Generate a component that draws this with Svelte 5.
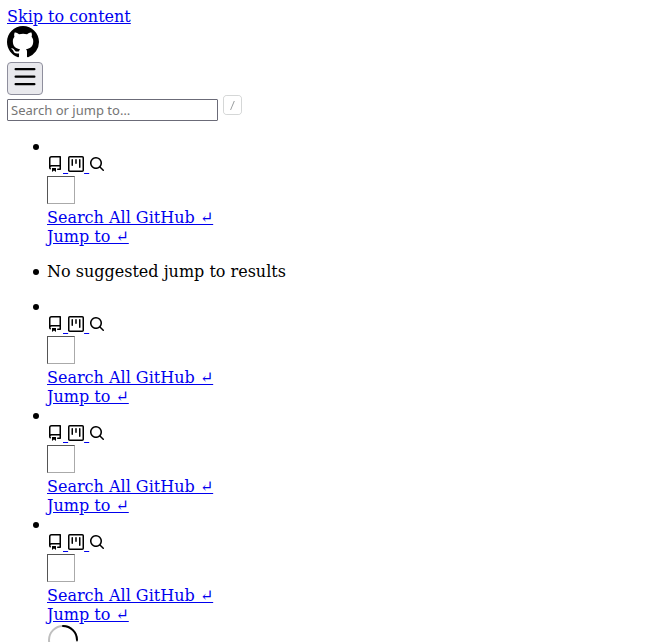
<script>
  const groups = [0, 1, 2];
</script>

{#snippet jump()}
  <div class="jump">
    <a href="#jump" class="icons"><svg width="16" height="16" viewBox="0 0 16 16"><path fill-rule="evenodd" d="M2 2.5A2.5 2.5 0 014.5 0h8.75a.75.75 0 01.75.75v12.5a.75.75 0 01-.75.75h-2.5a.75.75 0 110-1.5h1.75v-2h-8a1 1 0 00-.714 1.7.75.75 0 01-1.072 1.05A2.495 2.495 0 012 11.5v-9zm10.5-1V9h-8c-.356 0-.694.074-1 .208V2.5a1 1 0 011-1h8zM5 12.25v3.25a.25.25 0 00.4.2l1.45-1.087a.25.25 0 01.3 0L8.6 15.7a.25.25 0 00.4-.2v-3.25a.25.25 0 00-.25-.25h-3.5a.25.25 0 00-.25.25z"/></svg>{' '}<svg width="16" height="16" viewBox="0 0 16 16"><path fill-rule="evenodd" d="M1.75 0A1.75 1.75 0 000 1.75v12.5C0 15.216.784 16 1.75 16h12.5A1.75 1.75 0 0016 14.25V1.75A1.75 1.75 0 0014.25 0H1.75zM1.5 1.75a.25.25 0 01.25-.25h12.5a.25.25 0 01.25.25v12.5a.25.25 0 01-.25.25H1.75a.25.25 0 01-.25-.25V1.75zM11.75 3a.75.75 0 00-.75.75v7.5a.75.75 0 001.5 0v-7.5a.75.75 0 00-.75-.75zm-8.25.75a.75.75 0 011.5 0v5.5a.75.75 0 01-1.5 0v-5.5zM8 3a.75.75 0 00-.75.75v3.5a.75.75 0 001.5 0v-3.5A.75.75 0 008 3z"/></svg>{' '}<svg width="16" height="16" viewBox="0 0 16 16"><path fill-rule="evenodd" d="M11.5 7a4.499 4.499 0 11-8.998 0A4.499 4.499 0 0111.5 7zm-.82 4.74a6 6 0 111.06-1.06l3.04 3.04a.75.75 0 11-1.06 1.06l-3.04-3.04z"/></svg></a>
    <div class="avatar"></div>
    <div class="line"><a href="#all">Search All GitHub ↵</a></div>
    <div class="line"><a href="#to">Jump to ↵</a></div>
  </div>
{/snippet}

<main>
  <div class="line"><a href="#content">Skip to content</a></div>
  <svg class="logo" width="32" height="32" viewBox="0 0 16 16"><path fill-rule="evenodd" d="M8 0C3.58 0 0 3.58 0 8c0 3.54 2.29 6.53 5.47 7.59.4.07.55-.17.55-.38 0-.19-.01-.82-.01-1.49-2.01.37-2.53-.49-2.69-.94-.09-.23-.48-.94-.82-1.13-.28-.15-.68-.52-.01-.53.63-.01 1.08.58 1.23.82.72 1.21 1.87.87 2.33.66.07-.52.28-.87.51-1.07-1.78-.2-3.64-.89-3.64-3.95 0-.87.31-1.59.82-2.15-.08-.2-.36-1.02.08-2.12 0 0 .67-.21 2.2.82.64-.18 1.32-.27 2-.27.68 0 1.36.09 2 .27 1.53-1.04 2.2-.82 2.2-.82.44 1.1.16 1.92.08 2.12.51.56.82 1.27.82 2.15 0 3.07-1.87 3.75-3.65 3.95.29.25.54.73.54 1.48 0 1.07-.01 1.93-.01 2.2 0 .21.15.46.55.38A8.013 8.013 0 0016 8c0-4.42-3.58-8-8-8z"/></svg>
  <button aria-label="Menu"><svg width="24" height="24" viewBox="0 0 16 16"><path fill-rule="evenodd" d="M1 2.75A.75.75 0 011.75 2h12.5a.75.75 0 110 1.5H1.75A.75.75 0 011 2.75zm0 5A.75.75 0 011.75 7h12.5a.75.75 0 110 1.5H1.75A.75.75 0 011 7.75zM1.75 12a.75.75 0 100 1.5h12.5a.75.75 0 100-1.5H1.75z"/></svg></button>
  <div class="search">
    <input type="text" placeholder="Search or jump to…" />
    <svg width="22" height="20" viewBox="0 0 22 20"><path fill="none" stroke="#979A9C" opacity=".4" d="M3.5.5h12c1.7 0 3 1.3 3 3v13c0 1.7-1.3 3-3 3h-12c-1.7 0-3-1.3-3-3v-13c0-1.7 1.3-3 3-3z"/><path fill="#979A9C" d="M11.8 6L8 15.1h-.9L10.8 6h1z"/></svg>
  </div>
  <ul>
    <li>{@render jump()}</li>
  </ul>
  <ul><li>No suggested jump to results</li></ul>
  <ul class="last">
    {#each groups as g (g)}
      <li>{@render jump()}</li>
    {/each}
  </ul>
  <svg class="spinner" width="32" height="32" viewBox="0 0 16 16" fill="none"><circle cx="8" cy="8" r="7" stroke="#000" stroke-opacity=".25" stroke-width="1"/><path d="M8 1a7 7 0 017 7" stroke="#000" stroke-width="1" stroke-linecap="round"/></svg>
</main>

<style>
  :global(body) { background: #fff; overflow: hidden; }
  main {
    height: 642px;
    overflow: hidden;
    box-sizing: border-box;
    padding: 7px 7px 0;
    font: 16px/19px "DejaVu Serif", serif;
    color: #000;
  }
  a { color: #0000ee; text-decoration: underline; }
  .line { height: 19px; white-space: nowrap; }
  .logo { display: block; }
  button {
    display: block;
    width: 36px;
    height: 33px;
    margin: 4px 0;
    padding: 0 0 3px;
    border: 1px solid #8f8f9d;
    border-radius: 4px;
    background: #e9e9ed;
  }
  button svg { display: block; margin: 0 auto; }
  .search { display: flex; gap: 5px; height: 22px; }
  input {
    box-sizing: border-box;
    width: 211px;
    height: 22px;
    margin: 0;
    padding: 1px 3px;
    border: 1px solid #6b6b78;
    border-radius: 1px;
    background: #fff;
    font: 13px "Noto Sans", sans-serif;
    letter-spacing: 0.02px;
  }
  input::placeholder { color: #757575; opacity: 1; }
  .search svg { margin-top: -4px; }
  ul { margin: 16px 0; padding-left: 40px; list-style: none; }
  .last { margin-bottom: 0; }
  li { position: relative; }
  li::before {
    content: "";
    position: absolute;
    left: -14px;
    top: 7px;
    width: 6px;
    height: 6px;
    border-radius: 50%;
    background: #000;
  }
  .jump { padding-top: 19px; }
  .icons { display: block; height: 19px; }
  .icons svg { vertical-align: baseline; }
  svg { fill: #000; }
  .avatar {
    box-sizing: border-box;
    width: 28px;
    height: 28px;
    margin: 1px 0 4px;
    border: 1px solid;
    border-color: #555 #aaa #aaa #555;
  }
  .spinner { display: block; margin-left: 40px; fill: none; }
</style>
